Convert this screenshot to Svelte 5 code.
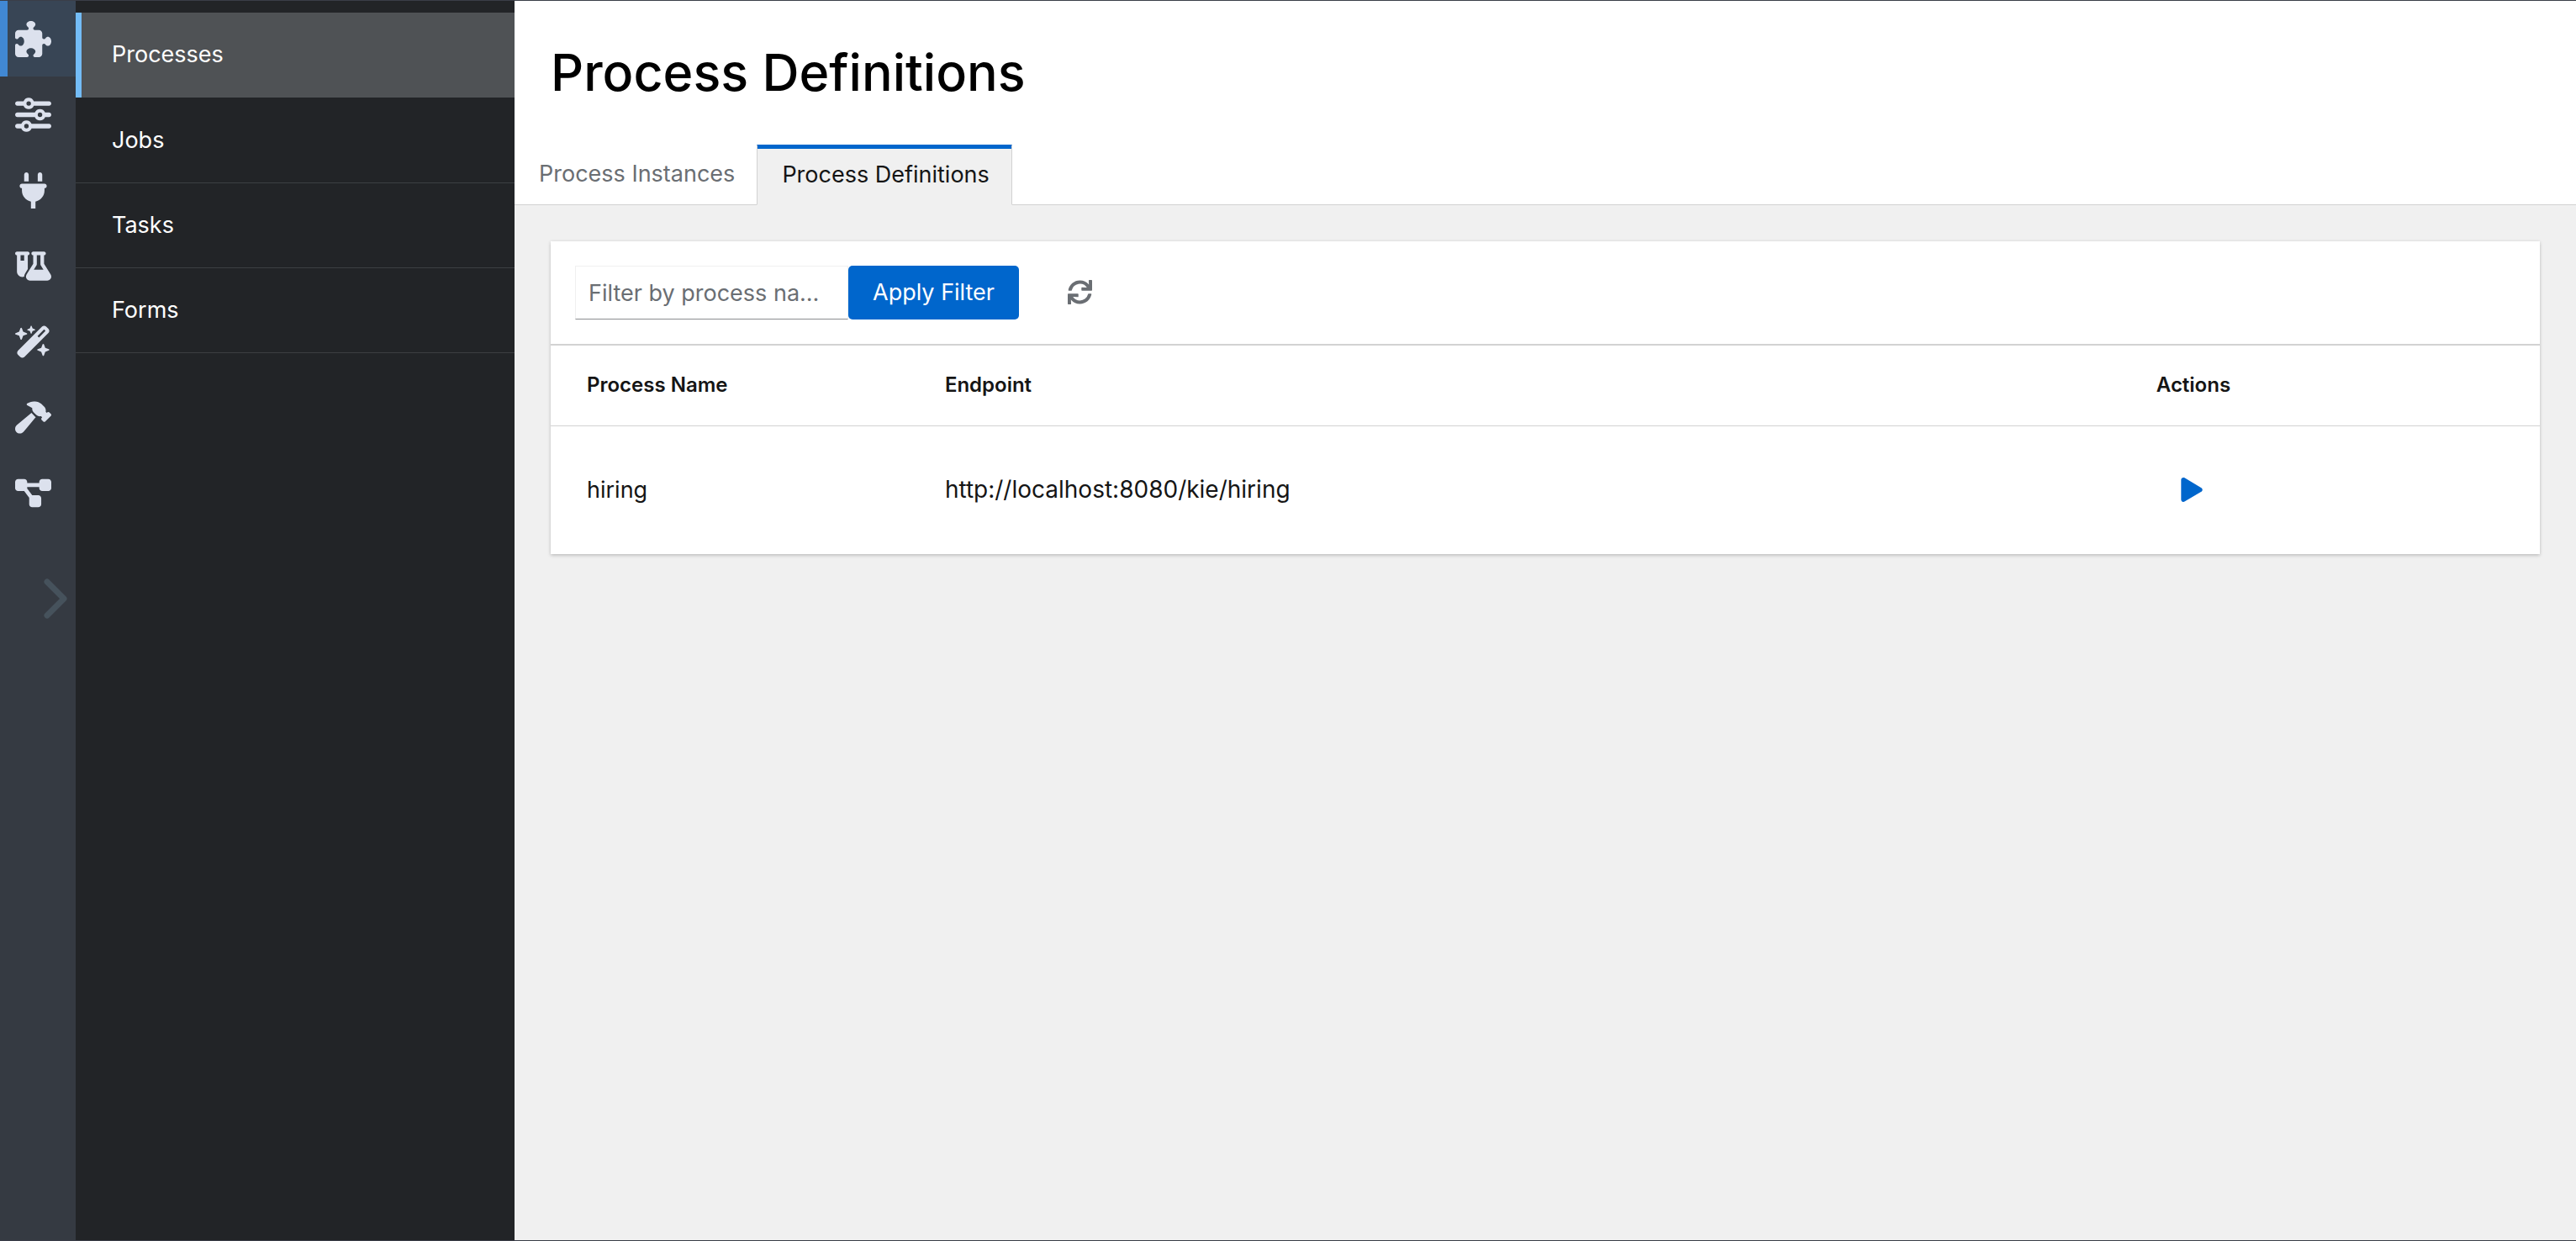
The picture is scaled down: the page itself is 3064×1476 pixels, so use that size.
<script>
  const icons = [
    { label: 'Applications', box: '0 0 512 512', d: 'M192 104.8c0-9.2-5.8-17.3-13.2-22.8C167.2 73.3 160 61.3 160 48c0-26.5 28.7-48 64-48s64 21.5 64 48c0 13.3-7.2 25.3-18.8 34c-7.4 5.5-13.2 13.6-13.2 22.8c0 12.8 10.4 23.2 23.2 23.2H336c26.5 0 48 21.5 48 48v56.8c0 12.8 10.4 23.2 23.2 23.2c9.2 0 17.3-5.8 22.8-13.2c8.7-11.6 20.7-18.8 34-18.8c26.5 0 48 28.7 48 64s-21.5 64-48 64c-13.3 0-25.3-7.2-34-18.8c-5.5-7.4-13.6-13.2-22.8-13.2c-12.8 0-23.2 10.4-23.2 23.2V464c0 26.5-21.5 48-48 48H279.2c-12.8 0-23.2-10.4-23.2-23.2c0-9.2 5.8-17.3 13.2-22.8c11.6-8.7 18.8-20.7 18.8-34c0-26.5-28.7-48-64-48s-64 21.5-64 48c0 13.3 7.2 25.3 18.8 34c7.4 5.5 13.2 13.6 13.2 22.8c0 12.8-10.4 23.2-23.2 23.2H48c-26.5 0-48-21.5-48-48V343.2C0 330.4 10.4 320 23.2 320c9.2 0 17.3 5.8 22.8 13.2C54.7 344.8 66.7 352 80 352c26.5 0 48-28.7 48-64s-21.5-64-48-64c-13.3 0-25.3 7.2-34 18.8C40.5 250.2 32.4 256 23.2 256C10.4 256 0 245.6 0 232.8V176c0-26.5 21.5-48 48-48H168.8c12.8 0 23.2-10.4 23.2-23.2z' },
    { label: 'Settings', box: '0 0 512 512', d: 'M0 416c0 17.7 14.3 32 32 32l54.7 0c12.3 28.3 40.5 48 73.3 48s61-19.7 73.3-48L480 448c17.7 0 32-14.3 32-32s-14.3-32-32-32l-246.7 0c-12.3-28.3-40.5-48-73.3-48s-61 19.7-73.3 48L32 384c-17.7 0-32 14.3-32 32zm128 0a32 32 0 1 1 64 0 32 32 0 1 1 -64 0zM320 256a32 32 0 1 1 64 0 32 32 0 1 1 -64 0zm32-80c-32.8 0-61 19.7-73.3 48L32 224c-17.7 0-32 14.3-32 32s14.3 32 32 32l246.7 0c12.3 28.3 40.5 48 73.3 48s61-19.7 73.3-48l54.7 0c17.7 0 32-14.3 32-32s-14.3-32-32-32l-54.7 0c-12.3-28.3-40.5-48-73.3-48zM192 128a32 32 0 1 1 0-64 32 32 0 1 1 0 64zm73.3-64C253 35.7 224.8 16 192 16s-61 19.7-73.3 48L32 64C14.3 64 0 78.3 0 96s14.3 32 32 32l86.7 0c12.3 28.3 40.5 48 73.3 48s61-19.7 73.3-48L480 128c17.7 0 32-14.3 32-32s-14.3-32-32-32L265.3 64z' },
    { label: 'Connections', box: '-64 0 512 512', d: 'M96 0C78.3 0 64 14.3 64 32v96h64V32c0-17.7-14.3-32-32-32zM288 0c-17.7 0-32 14.3-32 32v96h64V32c0-17.7-14.3-32-32-32zM32 160c-17.7 0-32 14.3-32 32s14.3 32 32 32v32c0 77.4 55 142 128 156.8V512h64V412.8C297 398 352 333.4 352 256V224c17.7 0 32-14.3 32-32s-14.3-32-32-32H32z' },
    { label: 'Testing', box: '0 0 640 512', d: 'M175 389.4c-9.8 16-15 34.3-15 53.1c-10 3.5-20.8 5.5-32 5.5c-53 0-96-43-96-96V64C14.3 64 0 49.7 0 32S14.3 0 32 0H96h64 64c17.7 0 32 14.3 32 32s-14.3 32-32 32V309.9l-49 79.6zM96 64v96h64V64H96zM352 0H480h32c17.7 0 32 14.3 32 32s-14.3 32-32 32V214.9L629.7 406.2c6.7 10.9 10.3 23.5 10.3 36.4c0 38.3-31.1 69.4-69.4 69.4H261.4c-38.3 0-69.4-31.1-69.4-69.4c0-12.8 3.6-25.4 10.3-36.4L320 214.9V64c-17.7 0-32-14.3-32-32s14.3-32 32-32h32zm32 64V224c0 5.9-1.6 11.7-4.7 16.8L330.5 320h171l-48.8-79.2c-3.1-5-4.7-10.8-4.7-16.8V64H384z' },
    { label: 'Wizard', box: '0 0 576 512', d: 'M234.7 42.7L197 56.8c-3 1.1-5 4-5 7.2s2 6.1 5 7.2l37.7 14.1L248.8 123c1.1 3 4 5 7.2 5s6.1-2 7.2-5l14.1-37.7L315 71.2c3-1.1 5-4 5-7.2s-2-6.1-5-7.2L277.3 42.7 263.2 5c-1.1-3-4-5-7.2-5s-6.1 2-7.2 5L234.7 42.7zM46.1 395.4c-18.7 18.7-18.7 49.1 0 67.9l34.6 34.6c18.7 18.7 49.1 18.7 67.9 0L529.9 116.5c18.7-18.7 18.7-49.1 0-67.9L495.3 14.1c-18.7-18.7-49.1-18.7-67.9 0L46.1 395.4zM484.6 82.6l-105 105-23.3-23.3 105-105 23.3 23.3zM7.5 117.2C3 118.9 0 123.2 0 128s3 9.1 7.5 10.8L64 160l21.2 56.5c1.7 4.5 6 7.5 10.8 7.5s9.1-3 10.8-7.5L128 160l56.5-21.2c4.5-1.7 7.5-6 7.5-10.8s-3-9.1-7.5-10.8L128 96 106.8 39.5C105.1 35 100.8 32 96 32s-9.1 3-10.8 7.5L64 96 7.5 117.2zm352 256c-4.5 1.7-7.5 6-7.5 10.8s3 9.1 7.5 10.8L416 416l21.2 56.5c1.7 4.5 6 7.5 10.8 7.5s9.1-3 10.8-7.5L480 416l56.5-21.2c4.5-1.7 7.5-6 7.5-10.8s-3-9.1-7.5-10.8L480 352l-21.2-56.5c-1.7-4.5-6-7.5-10.8-7.5s-9.1 3-10.8 7.5L416 352l-56.5 21.2z' },
    { label: 'Build', box: '0 0 576 512', d: 'M413.5 237.5c-28.2 4.8-58.2-3.6-80-25.4l-38.1-38.1C280.4 159 272 138.8 272 117.6V105.5L192.3 62c-5.3-2.9-8.6-8.6-8.3-14.7s3.9-11.5 9.5-14l47.2-21C259.1 4.2 279 0 299.2 0h18.1c36.7 0 72 14 98.7 39.1l44.6 42c24.2 22.8 33.2 55.7 26.6 86L503 183l8-8c9.4-9.4 24.6-9.4 33.9 0l24 24c9.4 9.4 9.4 24.6 0 33.9l-88 88c-9.4 9.4-24.6 9.4-33.9 0l-24-24c-9.4-9.4-9.4-24.6 0-33.9l8-8-17.5-17.5zM27.4 377.1L260.9 182.6c3.5 4.9 7.5 9.6 11.8 14l38.1 38.1c6 6 12.4 11.2 19.2 15.7L134.9 484.6c-14.5 17.4-36 27.4-58.6 27.4C34.1 512 0 477.8 0 435.7c0-22.6 10.1-44.1 27.4-58.6z' },
    { label: 'Workflows', box: '0 0 576 512', d: 'M0 80C0 53.5 21.5 32 48 32h96c26.5 0 48 21.5 48 48V96H384V80c0-26.5 21.5-48 48-48h96c26.5 0 48 21.5 48 48v96c0 26.5-21.5 48-48 48H432c-26.5 0-48-21.5-48-48V160H192v16c0 1.7-.1 3.4-.3 5L272 288h96c26.5 0 48 21.5 48 48v96c0 26.5-21.5 48-48 48H272c-26.5 0-48-21.5-48-48V336c0-1.7 .1-3.4 .3-5L144 224H48c-26.5 0-48-21.5-48-48V80z' }
  ];
  const navItems = ['Processes', 'Jobs', 'Tasks', 'Forms'];
  const rows = [{ name: 'hiring', endpoint: 'http://localhost:8080/kie/hiring' }];
  let filter = $state('');
</script>

<div class="app">
  <nav class="rail" aria-label="Tools">
    {#each icons as icon, i}
      <button class="rail-item" class:active={i === 0} aria-label={icon.label}>
        <svg viewBox={icon.box} aria-hidden="true"><path fill-rule="evenodd" d={icon.d} /></svg>
      </button>
    {/each}
    <button class="expand" aria-label="Expand">
      <svg viewBox="0 0 28 48" aria-hidden="true"><path d="M4 4L24 24L4 44" /></svg>
    </button>
  </nav>

  <nav class="sidebar" aria-label="Main">
    {#each navItems as item, i}
      <a href="#{item.toLowerCase()}" class:current={i === 0}>{item}</a>
    {/each}
  </nav>

  <main>
    <header>
      <h1>Process Definitions</h1>
      <div class="tabs" role="tablist">
        <button role="tab" aria-selected="false">Process Instances</button>
        <button role="tab" aria-selected="true" class="selected">Process Definitions</button>
        <span class="rest"></span>
      </div>
    </header>

    <section class="card">
      <div class="toolbar">
        <input type="text" aria-label="Filter by process name" placeholder="Filter by process name" bind:value={filter} />
        <button class="apply">Apply Filter</button>
        <button class="refresh" aria-label="Refresh">
          <svg viewBox="0 0 512 512" aria-hidden="true"><path d="M440.65 12.57l4 82.77A247.16 247.16 0 0 0 255.83 8C134.73 8 33.91 94.92 12.29 209.82A12 12 0 0 0 24.09 224h49.05a12 12 0 0 0 11.67-9.26 175.91 175.91 0 0 1 317-56.94l-101.46-4.86a12 12 0 0 0-12.57 12v47.41a12 12 0 0 0 12 12H500a12 12 0 0 0 12-12V12a12 12 0 0 0-12-12h-47.37a12 12 0 0 0-11.98 12.57zM255.83 432a175.61 175.61 0 0 1-146-77.8l101.8 4.87a12 12 0 0 0 12.57-12v-47.4a12 12 0 0 0-12-12H12a12 12 0 0 0-12 12V500a12 12 0 0 0 12 12h47.35a12 12 0 0 0 12-12.6l-4.15-82.57A247.17 247.17 0 0 0 255.83 504c121.11 0 221.93-86.92 243.55-201.82a12 12 0 0 0-11.8-14.18h-49.05a12 12 0 0 0-11.67 9.26A175.86 175.86 0 0 1 255.83 432z" /></svg>
        </button>
      </div>
      <table>
        <colgroup>
          <col class="col-name" />
          <col />
          <col class="col-actions" />
        </colgroup>
        <thead>
          <tr><th scope="col">Process Name</th><th scope="col">Endpoint</th><th scope="col">Actions</th></tr>
        </thead>
        <tbody>
          {#each rows as row}
            <tr>
              <td>{row.name}</td>
              <td class="endpoint">{row.endpoint}</td>
              <td>
                <button class="play" aria-label="Start new {row.name} instance">
                  <svg viewBox="0 0 448 512" aria-hidden="true"><path d="M424.4 214.7L72.4 6.6C43.8-10.3 0 6.1 0 47.9V464c0 37.5 40.7 60.1 72.4 41.3l352-208c31.4-18.5 31.5-64.1 0-82.6z" /></svg>
                </button>
              </td>
            </tr>
          {/each}
        </tbody>
      </table>
    </section>
  </main>
</div>

<style>
  :global(body) {
    margin: 0;
  }
  .app {
    display: flex;
    box-sizing: border-box;
    min-height: 100vh;
    border-top: 1px solid #3a3e48;
    border-bottom: 1px solid #3a3e48;
    font-family: Inter, "Liberation Sans", sans-serif;
    font-size: 27px;
    line-height: 43px;
    color: #151515;
  }
  button,
  input {
    font: inherit;
    border: 0;
    padding: 0;
    margin: 0;
    background: none;
    cursor: pointer;
  }
  svg {
    display: block;
  }
  .rail {
    flex: 0 0 90px;
    display: flex;
    flex-direction: column;
    background: #353a42;
  }
  .rail-item {
    height: 90px;
    padding-left: 18px;
  }
  .rail-item.active {
    background: #384555;
    border-left: 9px solid #4188d3;
    padding-left: 9px;
  }
  .rail-item svg {
    width: 43px;
    height: 43px;
    fill: #dce1ed;
  }
  .expand {
    align-self: flex-end;
    margin: 57px 10px 0 0;
  }
  .expand svg {
    width: 28px;
    height: 48px;
    fill: none;
    stroke: #46525c;
    stroke-width: 7;
    stroke-linecap: round;
    stroke-linejoin: round;
  }
  .sidebar {
    flex: 0 0 522px;
    display: flex;
    flex-direction: column;
    box-sizing: border-box;
    padding-top: 14px;
    background: #222427;
  }
  .sidebar a {
    padding: 28px 43px 29px;
    border-bottom: 1px solid #3c3f42;
    color: #fff;
    text-decoration: none;
  }
  .sidebar a.current {
    background: #4f5255;
    border-left: 7px solid #73bcf7;
    border-bottom: 0;
    margin-bottom: 1px;
    padding: 28px 36px 30px;
  }
  main {
    flex: 1;
    min-width: 0;
    background: #f0f0f0;
  }
  header {
    background: #fff;
  }
  h1 {
    margin: 0;
    padding: 43px 43px 44px;
    font-size: 61px;
    font-weight: 500;
    line-height: 84px;
    color: #000;
  }
  .tabs {
    display: flex;
  }
  .tabs button {
    height: 72px;
    padding: 0 26px 2px 29px;
    border-bottom: 1px solid #d2d2d2;
    color: #6a6e73;
  }
  .tabs .selected {
    background: #f0f0f0;
    border: 1px solid #d2d2d2;
    border-top-color: #06c;
    border-bottom-color: #f0f0f0;
    box-shadow: inset 0 4px #06c;
    color: #151515;
  }
  .rest {
    flex: 1;
    border-bottom: 1px solid #d2d2d2;
  }
  .card {
    margin: 43px;
    background: #fff;
    box-shadow: 0 2px 4px rgba(3, 3, 3, 0.16), 0 0 4px rgba(3, 3, 3, 0.08);
  }
  .toolbar {
    display: flex;
    align-items: center;
    padding: 29px;
    border-bottom: 2px solid #d2d2d2;
  }
  .toolbar input {
    box-sizing: border-box;
    width: 325px;
    height: 64px;
    padding: 0 29px 0 15px;
    border: 1px solid #f0f0f0;
    border-bottom-color: #8a8d90;
    color: #151515;
    text-overflow: ellipsis;
    cursor: text;
  }
  .toolbar input::placeholder {
    color: #6a6e73;
    opacity: 1;
    text-overflow: ellipsis;
  }
  .apply {
    height: 64px;
    padding: 0 29px 2px;
    border-radius: 5px;
    background: #06c;
    color: #fff;
  }
  .refresh {
    padding: 0 29px 2px;
    margin-left: 29px;
  }
  .refresh svg {
    width: 29px;
    height: 29px;
    fill: #6a6e73;
  }
  table {
    width: 100%;
    border-spacing: 0;
    table-layout: fixed;
  }
  .col-name {
    width: 18%;
  }
  .col-actions {
    width: 21.1%;
  }
  th,
  td {
    box-sizing: border-box;
    padding: 0 0 2px 43px;
    text-align: left;
  }
  th {
    height: 96px;
    font-size: 24px;
    font-weight: 600;
    border-bottom: 1px solid #d2d2d2;
  }
  td {
    height: 152px;
  }
  .endpoint {
    font-size: 28px;
  }
  .play {
    display: block;
    padding: 10px 29px;
  }
  .play svg {
    width: 26px;
    height: 29px;
    fill: #06c;
  }
</style>
